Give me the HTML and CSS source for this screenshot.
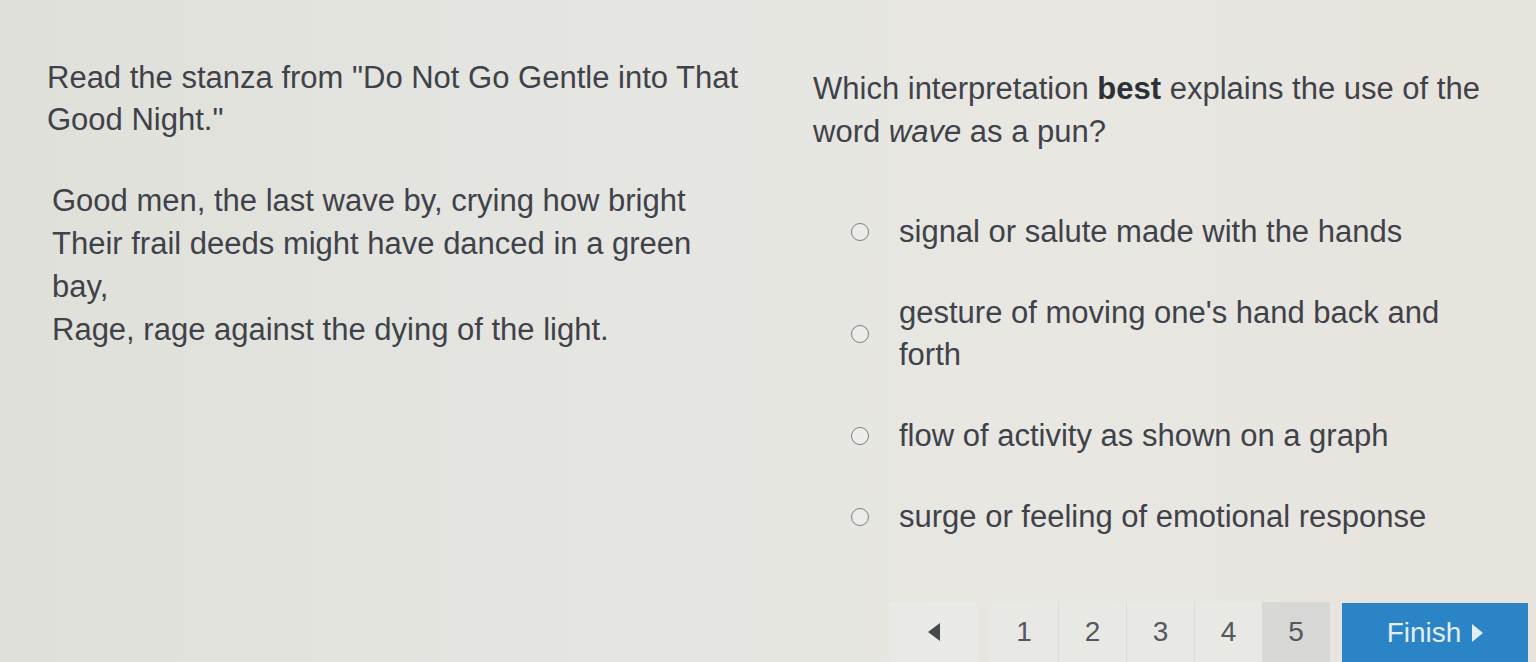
FILE: index.html
```html
<!DOCTYPE html>
<html lang="en">
<head>
<meta charset="utf-8">
<title>Question 5</title>
<link rel="stylesheet" href="styles.css">
</head>
<body>
<div class="page">
  <main class="content">
    <section class="passage">
      <p class="intro">Read the stanza from "Do Not Go Gentle into That Good Night."</p>
      <p class="poem">Good men, the last wave by, crying how bright<br>Their frail deeds might have danced in a green bay,<br>Rage, rage against the dying of the light.</p>
    </section>
    <section class="question">
      <p class="prompt"><span>Which interpretation <b>best</b> explains the use of the</span><br><span>word <i>wave</i> as a pun?</span></p>
      <ul class="options">
        <li class="option"><span class="radio"></span><span class="label">signal or salute made with the hands</span></li>
        <li class="option"><span class="radio"></span><span class="label">gesture of moving one's hand back and forth</span></li>
        <li class="option"><span class="radio"></span><span class="label">flow of activity as shown on a graph</span></li>
        <li class="option"><span class="radio"></span><span class="label">surge or feeling of emotional response</span></li>
      </ul>
    </section>
  </main>
  <nav class="pager">
    <button class="prev"><svg width="14" height="18" viewBox="0 0 14 18"><polygon points="13,0 13,18 1,9" fill="#45484d"/></svg></button>
    <div class="pages">
      <span class="pg">1</span>
      <span class="pg">2</span>
      <span class="pg">3</span>
      <span class="pg">4</span>
      <span class="pg current">5</span>
    </div>
    <button class="finish">Finish <svg width="12" height="18" viewBox="0 0 12 18"><polygon points="1,0 1,18 12,9" fill="#e4edf5"/></svg></button>
  </nav>
</div>
</body>
</html>
```

FILE: styles.css
```css
* { box-sizing: border-box; }
html, body { margin: 0; padding: 0; }
body {
  background: #e3e2dd;
  color: #3f4249;
  font-family: "Liberation Sans", Arial, sans-serif;
  font-size: 31px;
  height: 662px;
  overflow: hidden;
}
.page {
  height: 662px;
  display: flex;
  flex-direction: column;
  background: linear-gradient(90deg, #e0e0db 0%, #e5e5e1 40%, #e8e7e2 70%, #e7e3dd 100%);
}
.content {
  display: flex;
  flex: 1;
}
p { margin: 0; }
.passage {
  width: 813px;
  padding: 57px 20px 0 47px;
  line-height: 42px;
}
.intro { width: 730px; }
.poem {
  margin-top: 38px;
  padding-left: 5px;
  width: 660px;
  line-height: 43px;
}
.question {
  flex: 1;
  padding-top: 67px;
  line-height: 43px;
}
.prompt { width: 700px; }
.prompt b { color: #2e3037; }
.options {
  list-style: none;
  margin: 58px 0 0 0;
  padding: 0 0 0 38px;
  display: flex;
  flex-direction: column;
  gap: 39px;
}
.option {
  display: flex;
  align-items: center;
  gap: 30px;
  line-height: 42px;
}
.option .label { width: 570px; }
.radio {
  width: 18px;
  height: 18px;
  border-radius: 50%;
  border: 1.5px solid #7d7f82;
  background: #ecece9;
  flex: none;
}
.pager {
  display: flex;
  justify-content: flex-end;
  align-items: stretch;
  height: 62px;
  padding-right: 8px;
  font-size: 28px;
}
.pager button {
  border: none;
  font: inherit;
  margin: 0;
  padding: 0;
}
.prev {
  width: 87px;
  margin-top: 2px !important;
  background: #e9e9e7;
  display: flex;
  align-items: center;
  justify-content: center;
}
.pages {
  display: flex;
  margin-left: 13px;
  margin-top: 2px;
  background: #e8e8e5;
}
.pg {
  width: 68px;
  display: flex;
  align-items: center;
  justify-content: center;
  color: #55585c;
  border-left: 1px solid #dcdcd9;
}
.pg:first-child { border-left: none; }
.pg.current { background: #d7d7d5; border-left: none; }
.finish {
  width: 186px;
  margin-left: 12px !important;
  margin-top: 3px !important;
  background: #2b84c5;
  color: #e4edf5;
  display: flex;
  align-items: center;
  justify-content: center;
  gap: 10px;
}
```
